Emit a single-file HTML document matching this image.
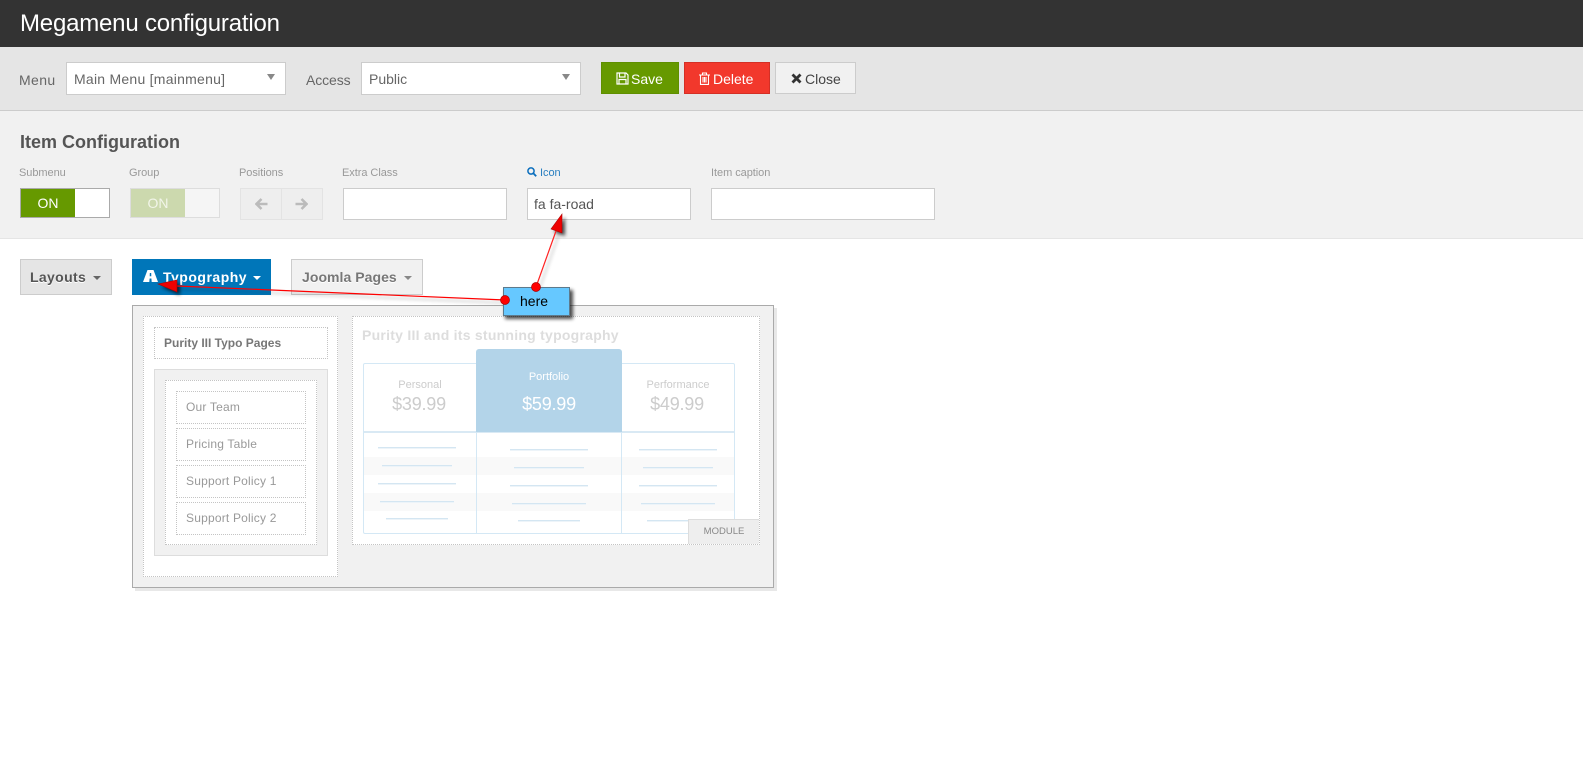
<!DOCTYPE html>
<html>
<head>
<meta charset="utf-8">
<style>
html,body{margin:0;padding:0;background:#fff;width:1583px;height:775px;overflow:hidden}
body{position:relative;font-family:"Liberation Sans",sans-serif;color:#555}
.a{position:absolute;box-sizing:border-box}
.t{position:absolute;white-space:nowrap;line-height:16px}
.c{transform:translateX(-50%)}
.lbl{font-size:11px;color:#999;top:165px;letter-spacing:-.05px}
.sel{background:#fff;border:1px solid #ccc;height:33px;top:62px}
.inp{background:#fff;border:1px solid #ccc;height:32px;top:188px}
.caret{position:absolute;width:0;height:0;border-left:4px solid transparent;border-right:4px solid transparent}
.dot{border:1px dotted #c4c4c4;background:#fff}
.it{left:176px;width:130px;height:33px}
.l{position:absolute;height:1px;background:#d4e6f2;box-shadow:0 1px 0 #edf4f9}
.v{position:absolute;width:1px;background:#d4e8f5}
</style>
</head>
<body>
<div class="a" style="left:0;top:0;width:1583px;height:47px;background:#333"></div>
<div class="t" style="left:20px;top:10px;font-size:24px;line-height:28px;color:#fff;letter-spacing:-.2px">Megamenu configuration</div>

<div class="a" style="left:0;top:47px;width:1583px;height:64px;background:#e5e5e5;border-bottom:1px solid #ccc"></div>
<div class="t" style="left:19px;top:72px;font-size:14px;color:#666;letter-spacing:.4px">Menu</div>
<div class="a sel" style="left:66px;width:220px"></div>
<div class="t" style="left:74px;top:71px;font-size:14px;color:#666;letter-spacing:.25px">Main Menu [mainmenu]</div>
<div class="caret" style="left:267px;top:74px;border-top:6px solid #888"></div>
<div class="t" style="left:306px;top:72px;font-size:14px;color:#666;letter-spacing:-.1px">Access</div>
<div class="a sel" style="left:361px;width:220px"></div>
<div class="t" style="left:369px;top:71px;font-size:14px;color:#666">Public</div>
<div class="caret" style="left:562px;top:74px;border-top:6px solid #888"></div>

<div class="a" style="left:601px;top:62px;width:78px;height:32px;background:#690;border:1px solid #5f8f00"></div>
<svg class="a" style="left:616px;top:72px" width="13" height="13" viewBox="0 0 13 13"><path d="M1 1H10L12 3V12H1ZM3.500 1.500V5H9V1.500M3 12V7.500H10V12" fill="none" stroke="#fff" stroke-width="1.200"/></svg>
<div class="t" style="left:631px;top:71px;font-size:14px;color:#fff">Save</div>

<div class="a" style="left:684px;top:62px;width:86px;height:32px;background:#f2382c;border:1px solid #d42f25"></div>
<svg class="a" style="left:699px;top:72px" width="11" height="13" viewBox="0 0 11 13"><path d="M0 3H11M3.500 3V1H7.500V3M1.500 3V12.400H9.500V3M4 5V10.500M5.500 5V10.500M7 5V10.500" fill="none" stroke="#fff" stroke-width="1.100"/></svg>
<div class="t" style="left:713px;top:71px;font-size:14px;color:#fff">Delete</div>

<div class="a" style="left:775px;top:62px;width:81px;height:32px;background:#f1f1f1;border:1px solid #ccc"></div>
<svg class="a" style="left:791px;top:73px" width="11" height="11" viewBox="0 0 11 11"><path d="M1.500 1.500L9.500 9.500M9.500 1.500L1.500 9.500" fill="none" stroke="#333" stroke-width="2.800"/></svg>
<div class="t" style="left:805px;top:71px;font-size:14px;color:#444">Close</div>

<div class="a" style="left:0;top:111px;width:1583px;height:128px;background:#f1f1f1;border-bottom:1px solid #e5e5e5"></div>
<div class="t" style="left:20px;top:132px;font-size:18px;line-height:20px;font-weight:bold;color:#555">Item Configuration</div>

<div class="t lbl" style="left:19px">Submenu</div>
<div class="t lbl" style="left:129px">Group</div>
<div class="t lbl" style="left:239px">Positions</div>
<div class="t lbl" style="left:342px">Extra Class</div>
<svg class="a" style="left:527px;top:167px" width="10" height="10" viewBox="0 0 10 10"><circle cx="4" cy="4" r="3.100" fill="none" stroke="#0a6ebd" stroke-width="1.500"/><path d="M6.300 6.300L9.200 9.200" stroke="#0a6ebd" stroke-width="1.800"/></svg>
<div class="t lbl" style="left:540px;color:#2a7fc0">Icon</div>
<div class="t lbl" style="left:711px">Item caption</div>

<div class="a" style="left:20px;top:188px;width:90px;height:30px;background:#fff;border:1px solid #aaa"></div>
<div class="a" style="left:21px;top:189px;width:54px;height:28px;background:#690"></div>
<div class="t c" style="left:48px;top:195px;font-size:14px;color:#fff">ON</div>

<div class="a" style="left:130px;top:188px;width:90px;height:30px;background:#f5f5f5;border:1px solid #ddd"></div>
<div class="a" style="left:131px;top:189px;width:54px;height:28px;background:#ccd9ae"></div>
<div class="t c" style="left:158px;top:195px;font-size:14px;color:#f2f5e9">ON</div>

<div class="a" style="left:240px;top:188px;width:83px;height:32px;background:#eee;border:1px solid #e3e3e3"></div>
<div class="a" style="left:281px;top:188px;width:1px;height:32px;background:#e3e3e3"></div>
<svg class="a" style="left:255px;top:198px" width="13" height="12" viewBox="0 0 13 12"><path d="M6.500 1L1.500 6L6.500 11M2 6H12.500" fill="none" stroke="#bbb" stroke-width="2.600"/></svg>
<svg class="a" style="left:295px;top:198px" width="13" height="12" viewBox="0 0 13 12"><path d="M6.500 1L11.500 6L6.500 11M11 6H.5" fill="none" stroke="#bbb" stroke-width="2.600"/></svg>

<div class="a inp" style="left:343px;width:164px"></div>
<div class="a inp" style="left:527px;width:164px"></div>
<div class="t" style="left:534px;top:196px;font-size:14px;color:#555">fa fa-road</div>
<div class="a inp" style="left:711px;width:224px"></div>

<div class="a" style="left:20px;top:259px;width:92px;height:36px;background:#e5e5e5;border:1px solid #ccc"></div>
<div class="t" style="left:30px;top:269px;font-size:14px;font-weight:bold;color:#555;letter-spacing:.35px;text-shadow:0 1px 0 #fff">Layouts</div>
<div class="caret" style="left:93px;top:276px;border-top:4px solid #666"></div>

<div class="a" style="left:132px;top:259px;width:139px;height:36px;background:#0076b9"></div>
<svg class="a" style="left:143px;top:270px" width="15" height="12" viewBox="0 0 15 12"><path d="M4.500 0H10.500L15 12H8.700L8.400 8.500H6.600L6.300 12H0ZM6.800 3L6.700 6.300H8.300L8.200 3Z" fill="#fff" fill-rule="evenodd"/></svg>
<div class="t" style="left:163px;top:269px;font-size:14px;font-weight:bold;color:#fff;letter-spacing:.5px">Typography</div>
<div class="caret" style="left:253px;top:276px;border-top:4px solid #fff"></div>

<div class="a" style="left:291px;top:259px;width:132px;height:36px;background:#f1f1f1;border:1px solid #ccc"></div>
<div class="t" style="left:302px;top:269px;font-size:14px;font-weight:bold;color:#777;letter-spacing:.05px;text-shadow:0 1px 0 #fff">Joomla Pages</div>
<div class="caret" style="left:404px;top:276px;border-top:4px solid #888"></div>

<div class="a" style="left:132px;top:305px;width:642px;height:283px;background:#f1f1f1;border:1px solid #aaa;box-shadow:3px 3px 0 #e8e8e8"></div>
<div class="a dot" style="left:143px;top:316px;width:195px;height:261px"></div>
<div class="a dot" style="left:154px;top:327px;width:174px;height:32px"></div>
<div class="t" style="left:164px;top:335px;font-size:12px;font-weight:bold;color:#777">Purity III Typo Pages</div>
<div class="a" style="left:154px;top:369px;width:174px;height:187px;background:#f1f1f1;border:1px solid #ddd"></div>
<div class="a dot" style="left:165px;top:380px;width:152px;height:165px"></div>
<div class="a dot it" style="top:391px"></div>
<div class="a dot it" style="top:428px"></div>
<div class="a dot it" style="top:465px"></div>
<div class="a dot it" style="top:502px"></div>
<div class="t" style="left:186px;top:399px;font-size:12px;color:#999;letter-spacing:.2px">Our Team</div>
<div class="t" style="left:186px;top:436px;font-size:12px;color:#999;letter-spacing:.2px">Pricing Table</div>
<div class="t" style="left:186px;top:473px;font-size:12px;color:#999;letter-spacing:.2px">Support Policy 1</div>
<div class="t" style="left:186px;top:510px;font-size:12px;color:#999;letter-spacing:.2px">Support Policy 2</div>

<div class="a dot" style="left:352px;top:316px;width:408px;height:229px"></div>
<div class="t" style="left:362px;top:327px;font-size:14px;font-weight:bold;color:#ddd;letter-spacing:.25px">Purity III and its stunning typography</div>

<div class="a" style="left:363px;top:363px;width:372px;height:171px;border:1px solid #d4e8f5;border-radius:2px;background:#fff"></div>
<div class="a" style="left:364px;top:457px;width:370px;height:18px;background:#f9f9f9"></div>
<div class="a" style="left:364px;top:493px;width:370px;height:18px;background:#f9f9f9"></div>
<div class="a" style="left:364px;top:431px;width:370px;height:2px;background:#d9e9f4"></div>
<div class="v" style="left:476px;top:432px;height:101px"></div>
<div class="v" style="left:621px;top:432px;height:101px"></div>
<div class="a" style="left:476px;top:349px;width:146px;height:83px;background:#b3d4e9;border-radius:3px 3px 0 0"></div>

<div class="t c" style="left:420px;top:377px;font-size:11px;color:#ccc">Personal</div>
<div class="t c" style="left:419px;top:396px;font-size:18px;color:#ccc;letter-spacing:-.2px">$39.99</div>
<div class="t c" style="left:549px;top:369px;font-size:11px;color:#fff">Portfolio</div>
<div class="t c" style="left:549px;top:396px;font-size:18px;color:#fff;letter-spacing:-.2px">$59.99</div>
<div class="t c" style="left:678px;top:377px;font-size:11px;color:#ccc">Performance</div>
<div class="t c" style="left:677px;top:396px;font-size:18px;color:#ccc;letter-spacing:-.2px">$49.99</div>

<div class="l" style="left:378px;width:78px;top:447px"></div>
<div class="l" style="left:382px;width:70px;top:465px"></div>
<div class="l" style="left:378px;width:78px;top:483px"></div>
<div class="l" style="left:380px;width:74px;top:501px"></div>
<div class="l" style="left:386px;width:62px;top:518px"></div>
<div class="l" style="left:510px;width:78px;top:449px"></div>
<div class="l" style="left:514px;width:70px;top:467px"></div>
<div class="l" style="left:510px;width:78px;top:485px"></div>
<div class="l" style="left:512px;width:74px;top:503px"></div>
<div class="l" style="left:518px;width:62px;top:520px"></div>
<div class="l" style="left:639px;width:78px;top:449px"></div>
<div class="l" style="left:643px;width:70px;top:467px"></div>
<div class="l" style="left:639px;width:78px;top:485px"></div>
<div class="l" style="left:641px;width:74px;top:503px"></div>
<div class="l" style="left:647px;width:62px;top:520px"></div>

<div class="a" style="left:688px;top:519px;width:71px;height:25px;background:#eee;border-top:1px solid #ddd;border-left:1px solid #ddd"></div>
<div class="t c" style="left:724px;top:524px;font-size:9.500px;color:#888">MODULE</div>

<svg class="a" style="left:0;top:0;pointer-events:none" width="1583" height="775" viewBox="0 0 1583 775">
<defs><filter id="s" x="-50%" y="-50%" width="200%" height="200%"><feGaussianBlur stdDeviation="1.800"/></filter></defs>
<g opacity=".7" filter="url(#s)" transform="translate(3 3)">
<path d="M562 214L551 229L562 233Z" fill="#000"/>
<path d="M158 284L177 280L177 292Z" fill="#000"/>
<path d="M177 286L505 300" stroke="#000" stroke-width="1" opacity=".5"/>
<path d="M536 287L556 231" stroke="#000" stroke-width="1" opacity=".5"/>
</g>
<path d="M536 287L556 231" stroke="#f22" stroke-width="1.200"/>
<path d="M177 286L505 300" stroke="#f00" stroke-width="1.200"/>
<path d="M562 214L551 229L562 233Z" fill="#e00" stroke="#a00" stroke-width=".6"/>
<path d="M158 284L177 280L177 292Z" fill="#e00" stroke="#a00" stroke-width=".6"/>
<rect x="505" y="290" width="68" height="29" fill="#000" opacity=".7" filter="url(#s)"/>
<rect x="503.500" y="287.500" width="66" height="28" fill="#66c8ff" stroke="#5d7a8c" stroke-width="1"/>
<circle cx="536" cy="287" r="4.500" fill="#f00" stroke="#a00" stroke-width=".7"/>
<circle cx="505" cy="300" r="4.500" fill="#f00" stroke="#a00" stroke-width=".7"/>
<text x="520" y="306" font-family="Liberation Sans, sans-serif" font-size="14" fill="#000">here</text>
</svg>
</body>
</html>
